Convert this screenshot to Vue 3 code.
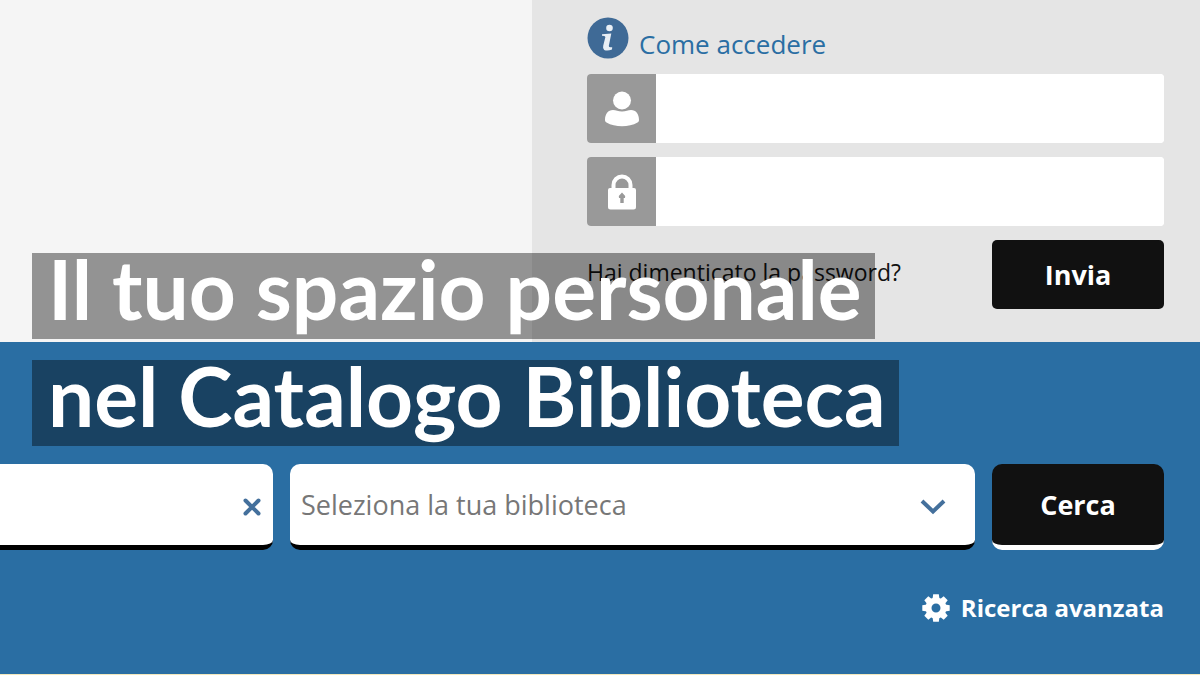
<script setup>
import { ref } from 'vue'

const username = ref('')
const password = ref('')
const query = ref('')
const library = ref('')
</script>

<template>
  <div class="page">
    <section class="top">
      <div class="blank"></div>
      <form class="login" @submit.prevent>
        <a class="help" href="#accedere">
          <svg class="info" viewBox="0 0 42 42" aria-hidden="true">
            <circle cx="21" cy="21" r="20.5" fill="#3f6a96" />
            <circle cx="22.5" cy="11" r="3.3" fill="#e9eff5" />
            <path d="M15 17.2 L24.3 16.6 L21.8 29 Q21.700 30.800 25.200 30.200 L25 32.400 Q20.500 34.200 17.200 32.900 Q15.500 31.900 16.200 28.800 L18.400 20 Q18.200 18.800 15 18.800 Z" fill="#e9eff5" />
          </svg>
          <span>Come accedere</span>
        </a>
        <div class="field">
          <label for="user" aria-label="Utente">
            <svg viewBox="0 0 36 36" aria-hidden="true">
              <circle cx="18" cy="9.500" r="9" />
              <path d="M1 29 C1 23 4 19 9 19 C12 19 14 20.500 18 20.500 C22 20.500 24 19 27 19 C32 19 35 23 35 29 C35 30 34.500 31 33.500 31.500 C25 36.500 11 36.500 2.500 31.500 C1.500 31 1 30 1 29 Z" />
            </svg>
          </label>
          <input id="user" v-model="username" type="text" autocomplete="username" />
        </div>
        <div class="field">
          <label for="pass" aria-label="Password">
            <svg viewBox="0 0 36 36" aria-hidden="true">
              <path d="M9.500 16 V11 a8.500 8.500 0 0 1 17 0 V16" fill="none" stroke="#fff" stroke-width="4" />
              <path fill-rule="evenodd" d="M6 14 H30 Q32 14 32 16 V33 Q32 35.500 29.500 35.500 H6.500 Q4 35.500 4 33 V16 Q4 14 6 14 Z M18 18.500 L14.800 22 L15 24 H16.300 V29 H19.700 V24 H21 L21.200 22 Z" />
            </svg>
          </label>
          <input id="pass" v-model="password" type="password" autocomplete="current-password" />
        </div>
        <div class="actions">
          <a class="forgot" href="#password">Hai dimenticato la password?</a>
          <button class="dark" type="submit">Invia</button>
        </div>
      </form>
    </section>

    <section class="search">
      <form class="bar" @submit.prevent>
        <div class="box query">
          <input v-model="query" type="text" aria-label="Cerca nel catalogo" />
          <button class="clear" type="button" aria-label="Cancella" @click="query = ''">
            <svg viewBox="0 0 18 18" aria-hidden="true">
              <path d="M2.500 2.500 L15.500 15.500 M15.500 2.500 L2.500 15.500" />
            </svg>
          </button>
        </div>
        <div class="box library">
          <select v-model="library" aria-label="Biblioteca">
            <option value="">Seleziona la tua biblioteca</option>
          </select>
          <svg class="chevron" viewBox="0 0 26 16" aria-hidden="true">
            <path d="M2 2 L13 12.500 L24 2" />
          </svg>
        </div>
        <button class="dark cerca" type="submit">Cerca</button>
      </form>
      <a class="advanced" href="#avanzata">
        <svg viewBox="-14 -14 28 28" aria-hidden="true">
          <circle r="7.500" fill="none" stroke="#fff" stroke-width="6" />
          <path v-for="n in 8" :key="n" :transform="`rotate(${n * 45})`" d="M-3.500 -9 L-2.800 -13.700 H2.800 L3.500 -9 Z" fill="#fff" />
        </svg>
        <span>Ricerca avanzata</span>
      </a>
    </section>

    <h1 class="title">
      <span>Il tuo spazio personale</span>
      <span>nel Catalogo Biblioteca</span>
    </h1>
  </div>
</template>

<style>
body {
  margin: 0;
}
</style>

<style scoped>
.page {
  position: relative;
  display: flex;
  flex-direction: column;
  min-height: 100vh;
  box-sizing: border-box;
  border-bottom: 1px solid #f3e8bd;
  overflow: hidden;
  font-family: "Open Sans", "Noto Sans", sans-serif;
}
a {
  text-decoration: none;
}
input,
select,
button {
  font: inherit;
  border: 0;
  margin: 0;
  box-sizing: border-box;
}
.top {
  display: grid;
  grid-template-columns: 532fr 668fr;
}
.blank {
  background: #f5f5f5;
}
.login {
  display: flex;
  flex-direction: column;
  gap: 14px;
  padding: 17px 36px 33px 55px;
  background: #e5e5e5;
}
.help {
  display: flex;
  gap: 10px;
  height: 43px;
  font-size: 26px;
  line-height: 54px;
  color: #2a6ea3;
}
.info {
  width: 42px;
  height: 42px;
}
.field {
  display: flex;
  height: 69px;
  border-radius: 4px;
  overflow: hidden;
  background: #fff;
}
.field label {
  display: flex;
  align-items: center;
  justify-content: center;
  width: 69px;
  background: #999;
}
.field svg {
  width: 36px;
  height: 36px;
  fill: #fff;
}
.field input {
  flex: 1;
  padding: 0 12px;
  font-size: 27px;
}
.actions {
  display: flex;
  justify-content: space-between;
}
.forgot {
  font-size: 23px;
  line-height: 64px;
  color: #111;
}
.dark {
  width: 172px;
  height: 69px;
  padding: 0;
  border-radius: 5px;
  background: #111;
  color: #fff;
  font-size: 27px;
  font-weight: 700;
}
.search {
  flex: 1;
  padding: 122px 36px 0 0;
  background: #2a6ea3;
}
.bar {
  display: grid;
  grid-template-columns: minmax(0, 273fr) minmax(0, 685fr) 172px;
  gap: 17px;
}
.box {
  display: flex;
  align-items: center;
  height: 86px;
  box-sizing: border-box;
  border-bottom: 5px solid #000;
  border-radius: 10px;
  background: #fff;
}
.query {
  border-top-left-radius: 0;
  border-bottom-left-radius: 0;
  padding-right: 12px;
}
.query input {
  flex: 1;
  min-width: 0;
  height: 60px;
  font-size: 27px;
}
.clear {
  display: flex;
  padding: 4px 0 0;
  background: none;
}
.clear svg {
  width: 18px;
  height: 18px;
}
.clear path,
.chevron path {
  fill: none;
  stroke: #44709c;
  stroke-width: 4;
}
.clear path {
  stroke-linecap: round;
}
.library {
  position: relative;
}
.library select {
  width: 100%;
  height: 81px;
  padding: 0 60px 0 11px;
  border-radius: 10px;
  appearance: none;
  background: none;
  color: #777;
  font-size: 27px;
}
.chevron {
  position: absolute;
  top: 35px;
  right: 29px;
  width: 26px;
  height: 16px;
  pointer-events: none;
}
.cerca {
  height: 86px;
  border-bottom: 5px solid #fff;
  border-radius: 10px;
}
.advanced {
  display: flex;
  align-items: center;
  justify-content: flex-end;
  gap: 11px;
  margin-top: 40px;
  color: #fff;
  font-size: 24px;
  font-weight: 700;
  line-height: 36px;
}
.advanced svg {
  width: 28px;
  height: 28px;
}
.title {
  position: absolute;
  top: 253px;
  left: 32px;
  display: flex;
  flex-direction: column;
  align-items: flex-start;
  gap: 21px;
  margin: 0;
  color: #fff;
  font-family: Lato, sans-serif;
  font-size: 82px;
  font-weight: 700;
  line-height: 70px;
  white-space: nowrap;
}
.title span {
  padding: 0 13px 16px 16px;
  background: rgba(0, 0, 0, 0.4);
}
</style>
